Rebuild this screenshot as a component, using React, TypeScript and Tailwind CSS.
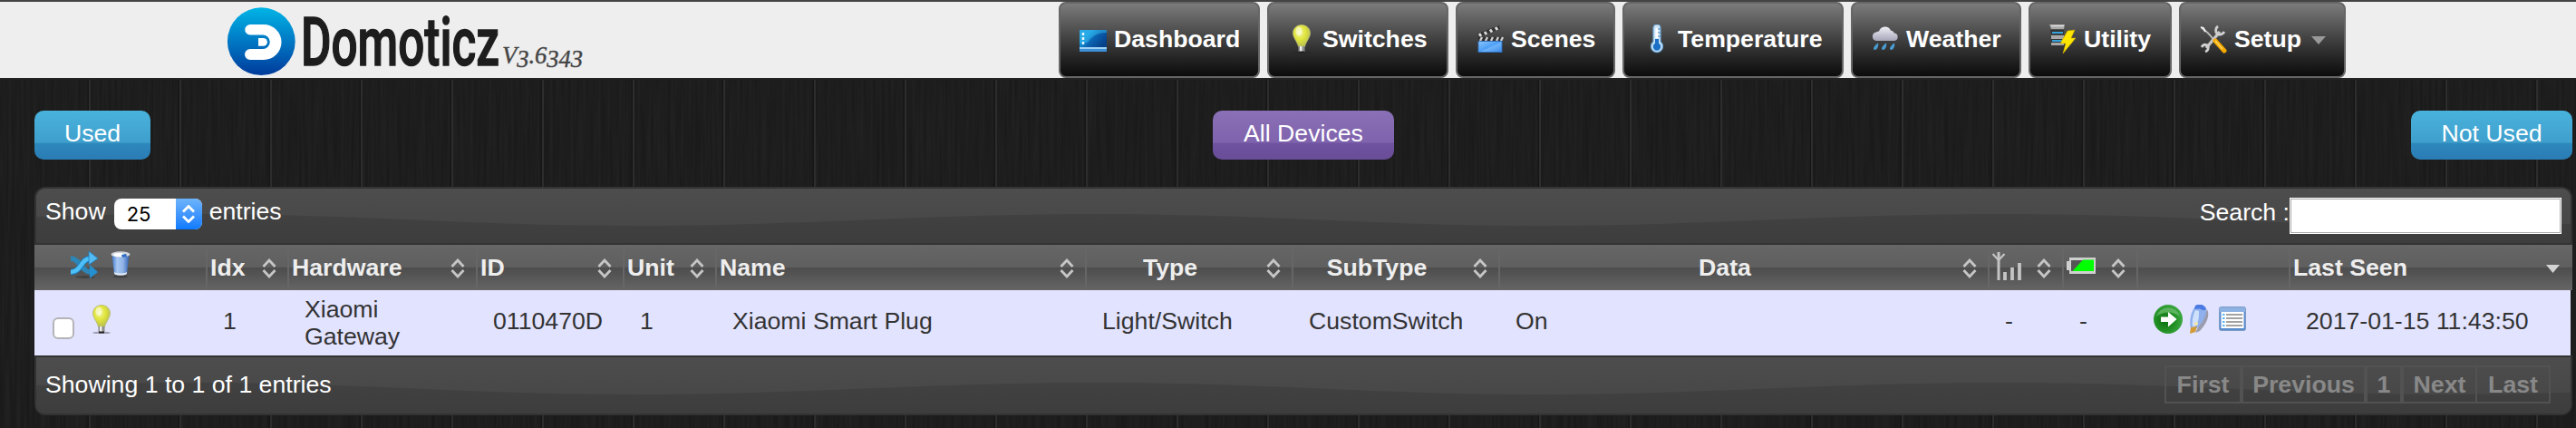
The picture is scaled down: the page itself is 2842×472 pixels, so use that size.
import React, { FC, ReactNode } from 'react';

const DashboardIcon = () => (
  <svg width="32" height="32" viewBox="0 0 32 32">
    <defs>
      <linearGradient id="dash" x1="0" y1="0" x2="1" y2="0.6">
        <stop offset="0" stopColor="#1d9be0" />
        <stop offset="0.35" stopColor="#1597dc" />
        <stop offset="0.6" stopColor="#0b62b0" />
        <stop offset="1" stopColor="#07418a" />
      </linearGradient>
    </defs>
    <rect x="1" y="6" width="30" height="20" fill="url(#dash)" />
    <path d="M1 6h30v3C20 9 14 13 10 20H1z" fill="#3ec0f2" opacity="0.45" />
    <rect x="1" y="25" width="30" height="5" fill="#3d8fd6" />
    <rect x="1" y="25" width="30" height="2" fill="#9fd0f3" />
    <path d="M5 9v3M5 14v3M5 19v3" stroke="#e8f6ff" strokeWidth="2.5" />
  </svg>
);

const BulbIcon = () => (
  <svg width="32" height="32" viewBox="0 0 32 32">
    <defs>
      <radialGradient id="bulb" cx="0.4" cy="0.35" r="0.65">
        <stop offset="0" stopColor="#f4f6a0" />
        <stop offset="0.5" stopColor="#e0e53c" />
        <stop offset="1" stopColor="#b9bf52" />
      </radialGradient>
    </defs>
    <ellipse cx="16" cy="31" rx="10" ry="1.3" fill="#222" opacity="0.35" />
    <path
      d="M16 .5c-5.500 0-9.500 4-9.500 9 0 5 4.500 9 6 15h7c1.500-6 6-10 6-15 0-5-4-9-9.500-9z"
      fill="url(#bulb)"
      stroke="#b5b878"
      strokeWidth="0.8"
    />
    <ellipse cx="13" cy="7.500" rx="3.500" ry="5" fill="#fff" opacity="0.5" />
    <rect x="12.500" y="24" width="7" height="6" fill="#8d8d8d" />
    <rect x="14" y="24" width="2.500" height="6" fill="#eee" />
    <rect x="13" y="29.500" width="6" height="2" fill="#222" />
  </svg>
);

const ScenesIcon = () => (
  <svg width="32" height="32" viewBox="0 0 32 32">
    <defs>
      <linearGradient id="scene" x1="0" y1="0" x2="1" y2="1">
        <stop offset="0" stopColor="#8cc5fb" />
        <stop offset="0.5" stopColor="#4c9ff6" />
        <stop offset="0.55" stopColor="#6fb4fa" />
        <stop offset="1" stopColor="#3a8bea" />
      </linearGradient>
    </defs>
    <path d="M2 10 26 1l1 4L3 14z" fill="#333" />
    <path d="m4 10 2 3M10 8l2 3M16 5.500l2 3M22 3l2 3" stroke="#ddd" strokeWidth="2.800" />
    <path d="M3 14h27v5H3z" fill="#2c2c2c" />
    <path d="m7 14-2 4M13 14l-2 4M19 14l-2 4M25 14l-2 4M30 14l-2 4" stroke="#ccc" strokeWidth="2.500" />
    <rect x="3" y="18.500" width="26" height="12" fill="url(#scene)" />
    <rect x="3" y="18.500" width="26" height="12" fill="none" stroke="#2f6fc0" strokeWidth="0.8" />
  </svg>
);

const TemperatureIcon = () => (
  <svg width="32" height="32" viewBox="0 0 32 32">
    <path
      d="M12 4a4 4 0 0 1 8 0v15a6.500 6.500 0 1 1-8 0z"
      fill="#cfe6f8"
      stroke="#6fa9d6"
      strokeWidth="1.200"
    />
    <path d="M16 16v8" stroke="#1b6fc6" strokeWidth="4" />
    <circle cx="16" cy="24.500" r="4.200" fill="#1b6fc6" />
    <path d="M16 4v11" stroke="#fff" strokeWidth="3" />
    <path d="M17 5h3M17 9h3M17 13h3" stroke="#4682b4" strokeWidth="1" />
  </svg>
);

const WeatherIcon = () => (
  <svg width="32" height="32" viewBox="0 0 32 32">
    <defs>
      <linearGradient id="cloud" x1="0" y1="0" x2="0" y2="1">
        <stop offset="0" stopColor="#efeff7" />
        <stop offset="1" stopColor="#a5a5b8" />
      </linearGradient>
    </defs>
    <path
      d="M6 18a4.800 4.800 0 0 1 0-9.500C7 7.500 8.500 7.500 9 7.500a7 7 0 0 1 13-1 5 5 0 0 1 4 3A4.300 4.300 0 0 1 26 18z"
      fill="url(#cloud)"
    />
    <path
      d="M8 20.500c1 3-1 7.500-3.500 7.500s-2-4 3.500-7.500zM17 20.500c1 3-1 7.500-3.500 7.500s-2-4 3.500-7.500zM26 20.500c1 3-1 7.500-3.500 7.500s-2-4 3.500-7.500z"
      fill="#4a9bd0"
    />
  </svg>
);

const UtilityIcon = () => (
  <svg width="32" height="32" viewBox="0 0 32 32">
    <path d="M1 0h17l-1 5H3zM3 12h14v4H3zM3 20h14v3H3z" fill="#a9a9a9" />
    <path d="M2 6h15v5H3zM3 16h14v4H3z" fill="#333" />
    <path d="M4 9h12M4 18h12" stroke="#35a3dd" strokeWidth="2" />
    <path d="M3 1.500h14" stroke="#ddd" strokeWidth="1.500" />
    <path d="m21 7 8-1-4 9h5L16 32l3-11h-6z" fill="#ffe600" stroke="#c9a800" strokeWidth="0.6" />
  </svg>
);

const SetupIcon = () => (
  <svg width="32" height="32" viewBox="0 0 32 32">
    <path d="M3 4c5 3 10 8 14 14" stroke="#bdbdbd" strokeWidth="2" fill="none" />
    <path d="m2 3 3 1 2 4" stroke="#eee" strokeWidth="2" fill="none" />
    <path d="M23 8 8 26" stroke="#c4c4c4" strokeWidth="3.500" />
    <path d="M21 2c-3 2-3 6-1 8s6 1.500 8-2" fill="none" stroke="#d0d0d0" strokeWidth="2.800" />
    <path d="M3 25c2-4 6-3 7-1s0 5-3 6" fill="none" stroke="#d0d0d0" strokeWidth="2.800" />
    <path d="m18 18 10 11" stroke="#f5a800" strokeWidth="5" strokeLinecap="round" />
    <path d="m18 18 8 9" stroke="#ffd75e" strokeWidth="1.500" />
  </svg>
);

const ShuffleIcon = () => (
  <svg width="32" height="32" viewBox="0 0 32 32" fill="none">
    <ellipse cx="17" cy="28.500" rx="11" ry="1.500" fill="#222" opacity="0.4" />
    <path d="M1 8c10 0 12 15 22 15" stroke="#2c86b8" strokeWidth="5.500" />
    <path d="m22 15 9 8-9 7z" fill="#2490cf" />
    <path d="M1 23C13 23 12 8 23 8" stroke="#1d7fbf" strokeWidth="6.500" />
    <path d="M1 23C13 23 12 8 23 8" stroke="#4fc0f7" strokeWidth="4.500" />
    <path d="m21 0 10 8-10 7z" fill="#53baf2" stroke="#1d7fbf" strokeWidth="0.8" />
  </svg>
);

const TrashIcon = () => (
  <svg width="32" height="32" viewBox="0 0 32 32">
    <defs>
      <linearGradient id="trash" x1="0" y1="0" x2="1" y2="0">
        <stop offset="0" stopColor="#3f78cc" />
        <stop offset="0.3" stopColor="#a9c8f2" />
        <stop offset="0.65" stopColor="#8fb2e6" />
        <stop offset="1" stopColor="#2f62b4" />
      </linearGradient>
    </defs>
    <ellipse cx="16" cy="28" rx="8" ry="1.500" fill="#222" opacity="0.4" />
    <path d="M6.500 3h19L23 25c-2 2-12 2-14 0z" fill="url(#trash)" />
    <path d="M9 23c3 2 11 2 14 0l-.3 2c-3 2-10 2-13.400 0z" fill="#e9eef6" />
    <ellipse cx="16" cy="3.500" rx="10.500" ry="3.200" fill="#cfd4da" />
    <ellipse cx="14" cy="4" rx="6" ry="2" fill="#fff" />
    <path d="m17 4 5-1 1 3-5 1z" fill="#2d6cc4" />
  </svg>
);

const SignalIcon = () => (
  <svg width="34" height="32" viewBox="0 0 34 32" fill="none" stroke="#c4c4c4">
    <path d="M7 1v31" strokeWidth="3" />
    <path d="m.5 3 6.500 7 6.500-7" strokeWidth="2.200" />
    <path d="M14 32v-9M22 32V18M30 32V13" strokeWidth="3.800" />
  </svg>
);

const BatteryIcon = () => (
  <svg width="32" height="18" viewBox="0 0 32 18">
    <path d="M0 4h3V0h29v18H3v-4H0z" fill="#cfcfcf" />
    <rect x="5" y="3" width="25" height="12" fill="#565656" />
    <path d="M18 2.500h12v12.500H6.500z" fill="#0f0" />
  </svg>
);

const ArrowIcon = () => (
  <svg width="32" height="32" viewBox="0 0 32 32">
    <defs>
      <radialGradient id="arrow" cx="0.4" cy="0.55" r="0.6">
        <stop offset="0" stopColor="#0c6e10" />
        <stop offset="0.6" stopColor="#239126" />
        <stop offset="1" stopColor="#3fa843" />
      </radialGradient>
    </defs>
    <circle cx="16" cy="16" r="16" fill="url(#arrow)" />
    <path d="M3 13A13.500 13.500 0 0 1 29 13C22 7 10 7 3 13z" fill="#8fd28f" opacity="0.5" />
    <path d="M8 13.500h8V8l9.500 8-9.500 8.500V19H8z" fill="#fff" />
  </svg>
);

const PencilIcon = () => (
  <svg width="32" height="32" viewBox="0 0 32 32">
    <path d="M23 5c4 8-2 17-8 24l-5 2z" fill="#444" opacity="0.45" />
    <path d="M10 2c4-3 10-2 12 2 1 8-4 16-10 22l-7 1C3 18 5 8 10 2z" fill="#8fb0ec" />
    <path d="M10 6c-3 6-4 13-3 19l5-3c2-6 2-11 2-15z" fill="#cfe0fa" />
    <path d="M10 1c5-3 10-1 12 4-3 2-4 1-6 0s-5 0-7 0z" fill="#4a7ae2" />
    <path d="m5 25 7-1-2 6-6 2z" fill="#d29a35" />
    <circle cx="11" cy="21" r="2" fill="#f3e7a8" />
  </svg>
);

const ListIcon = () => (
  <svg width="32" height="32" viewBox="0 0 32 32">
    <rect x="0.500" y="2.500" width="29" height="26" rx="2" fill="#5b8ccc" stroke="#7d9cc8" />
    <rect x="1" y="3" width="28" height="5" fill="#8db2e2" />
    <rect x="2.500" y="8" width="25" height="18" fill="#fff" />
    <path d="M8 11h18M8 15h18M8 19h18M8 23h18" stroke="#a3a3a3" strokeWidth="2" />
    <path d="M4 11h2.500M4 15h2.500M4 19h2.500M4 23h2.500" stroke="#5fb5f5" strokeWidth="2.200" />
  </svg>
);

const SortIcon = () => (
  <svg width="16" height="22" viewBox="0 0 16 22" fill="none" stroke="#c6c6c6" strokeWidth="2.800">
    <path d="m1.500 9 6.500-7 6.500 7M1.500 13 8 20l6.500-7" />
  </svg>
);

const Logo = () => (
  <svg className="overflow-visible" width="400" height="84" viewBox="250 2 400 84">
    <defs>
      <linearGradient id="logo" x1="0" y1="0" x2="0" y2="1">
        <stop offset="0" stopColor="#00b5e6" />
        <stop offset="0.5" stopColor="#0078c4" />
        <stop offset="1" stopColor="#003a9b" />
      </linearGradient>
    </defs>
    <circle cx="288.300" cy="45.700" r="37.400" fill="url(#logo)" />
    <path
      d="M276 27h15a19.500 19.500 0 0 1 0 39h-15a6 6 0 0 1 0-12h14a7.500 7.500 0 0 0 0-15.500h-14a5.700 5.700 0 0 1 0-11.500z"
      fill="#fff"
    />
    <path d="M285 42h5.500a4.400 4.400 0 0 1 0 8.800H285z" fill="#fff" />
    <text
      x="332"
      y="71.500"
      textLength="219"
      lengthAdjust="spacingAndGlyphs"
      className="fill-[#1d1d1d] font-[Roboto,sans-serif] text-[74px] font-medium"
      stroke="#1d1d1d"
      strokeWidth="1.500"
    >
      Domoticz
    </text>
    <text
      x="554"
      y="69.500"
      className="fill-[#444] font-['Liberation_Serif',serif] text-[26.500px] italic"
      stroke="#444"
      strokeWidth="0.400"
    >
      V<tspan dy="4">3</tspan>
      <tspan dy="-4">.6</tspan>
      <tspan dy="4">343</tspan>
    </text>
  </svg>
);

// dark wood behind the whole page, one board is 100px wide
const Boards = () => (
  <svg className="absolute inset-0" width="2842" height="472">
    <defs>
      <filter id="grain" x="0" y="0" width="100%" height="100%" colorInterpolationFilters="sRGB">
        <feTurbulence type="fractalNoise" baseFrequency="0.3 0.01" numOctaves="2" seed="4" />
        <feColorMatrix values="0.05 0 0 0 0.09  0.05 0 0 0 0.09  0.05 0 0 0 0.09  0 0 0 0 1" />
      </filter>
      <pattern id="boards" width="100" height="472" patternUnits="userSpaceOnUse">
        <rect x="96.500" width="1.500" height="472" fill="#161616" />
        <rect x="98" width="2" height="472" fill="#2d2d2d" />
      </pattern>
    </defs>
    <rect width="2842" height="472" filter="url(#grain)" />
    <rect width="2842" height="472" fill="url(#boards)" />
  </svg>
);

const Wave: FC<{ height: number }> = ({ height }) => (
  <svg className="absolute inset-0" width="2796" height={height}>
    <defs>
      <linearGradient id="waveTop" x1="0" y1="0" x2="0" y2="1">
        <stop offset="0" stopColor="#4d4d4d" />
        <stop offset="1" stopColor="#454545" />
      </linearGradient>
      <linearGradient id="waveBottom" x1="0" y1="0" x2="0" y2="1">
        <stop offset="0" stopColor="#414141" />
        <stop offset="1" stopColor="#3a3a3a" />
      </linearGradient>
    </defs>
    <rect width="2796" height={height} fill="url(#waveTop)" />
    <path
      d="M-340 41C-170 41-20 28 170 28S480 41 660 41 980 28 1170 28s310 13 490 13 320-13 510-13 310 13 490 13 320-13 510-13v60H-340z"
      fill="url(#waveBottom)"
    />
  </svg>
);

const menu = [
  { label: 'Dashboard', icon: <DashboardIcon />, width: 'w-[222px]' },
  { label: 'Switches', icon: <BulbIcon />, width: 'w-[200px]' },
  { label: 'Scenes', icon: <ScenesIcon />, width: 'w-[176px]' },
  { label: 'Temperature', icon: <TemperatureIcon />, width: 'w-[244px]' },
  { label: 'Weather', icon: <WeatherIcon />, width: 'w-[188px]' },
  { label: 'Utility', icon: <UtilityIcon />, width: 'w-[158px]' },
  { label: 'Setup', icon: <SetupIcon />, width: 'w-[184px]' },
];

const Navbar = () => (
  <header className="relative flex h-[88px] border-t-2 border-b-2 border-t-[#444] border-b-[#222] bg-[#eee] pl-[250px]">
    <Logo />
    <nav className="mr-[254px] ml-auto flex gap-2">
      {menu.map((item) => (
        <a
          key={item.label}
          className={`flex h-[84px] items-center rounded-lg border-2 border-[#666] bg-linear-to-b from-[#7c7c7c] to-[#0c0c0c] pb-[3px] pl-5 font-bold text-white ${item.width}`}
        >
          <span className="mr-[7px] shrink-0">{item.icon}</span>
          {item.label}
          {item.label === 'Setup' && (
            <svg className="mt-1 ml-[11px]" width="16" height="9">
              <path d="M0 0h16L8 9z" fill="#999" />
            </svg>
          )}
        </a>
      ))}
    </nav>
  </header>
);

const Button: FC<{ children: ReactNode; className: string }> = ({ children, className }) => (
  <button
    className={`flex h-[54px] items-center justify-center rounded-[10px] bg-linear-to-b pb-[5px] text-white ${className}`}
  >
    {children}
  </button>
);

const blue = 'bg-[linear-gradient(#49b3dc_0%,#3f9fcc_65%,#2d88bd_67%,#2a7cb4_100%)]';
const purple = 'bg-[linear-gradient(#8a70b6_0%,#7f63ad_65%,#6f52a0_67%,#694d98_100%)]';

const columns =
  'grid grid-cols-[189px_90px_208px_162px_102px_408px_228px_228px_540px_82px_82px_168px_313px]';

const HeadCell: FC<{ children?: ReactNode; center?: boolean; sort?: boolean }> = ({
  children,
  center,
  sort = true,
}) => (
  <div className="flex h-full items-center border-l-2 border-[#666] pr-3 pl-[3px]">
    <div className={center ? 'flex flex-1 justify-center pr-[17px]' : 'flex-1'}>{children}</div>
    {sort && (
      <span className="mt-0.5">
        <SortIcon />
      </span>
    )}
  </div>
);

const DevicesTable = () => (
  <section className="mt-[30px] w-[2800px]">
    <div className="relative h-16 overflow-hidden rounded-t-xl border-2 border-[#333] bg-[#444]">
      <Wave height={62} />
      <div className="relative flex h-[58px] items-start justify-between pr-2.5 pl-[10px] text-white">
        <div className="flex h-[49px] items-center">
          Show
          <span className="mt-[7px] ml-[9px] flex h-[34px] w-[97px] items-center rounded-lg bg-white font-[Inter,sans-serif] text-[22px] text-black">
            <span className="flex-1 pl-3.5">25</span>
            <span className="flex h-[34px] w-[29px] items-center justify-center rounded-r-lg bg-linear-to-b from-[#6cb3fa] to-[#067aff]">
              <svg width="14" height="20" fill="none" stroke="#fff" strokeWidth="2.800">
                <path d="m1 7.500 6-6 6 6M1 12.500l6 6 6-6" />
              </svg>
            </span>
          </span>
          <span className="ml-2">entries</span>
        </div>
        <div className="flex pt-2.5">
          <span className="-mt-px leading-[34px]">Search :</span>
          <span className="h-10 w-[300px] border border-white bg-white">
            <span className="block h-full border border-[#aaa]" />
          </span>
        </div>
      </div>
    </div>

    <div
      className={`${columns} h-[50px] items-center bg-[linear-gradient(#666_0%,#5f5f5f_49%,#4d4d4d_51%,#656565_100%)] font-bold text-[#eee]`}
    >
      <div className="flex gap-2 pb-2.5 pl-[39px]">
        <span className="pt-1.5">
          <ShuffleIcon />
        </span>
        <span className="pt-1.5">
          <TrashIcon />
        </span>
      </div>
      <HeadCell>Idx</HeadCell>
      <HeadCell>Hardware</HeadCell>
      <HeadCell>ID</HeadCell>
      <HeadCell>Unit</HeadCell>
      <HeadCell>Name</HeadCell>
      <HeadCell center>Type</HeadCell>
      <HeadCell center>SubType</HeadCell>
      <HeadCell center>Data</HeadCell>
      <HeadCell>
        <span className="block pb-1">
          <SignalIcon />
        </span>
      </HeadCell>
      <HeadCell>
        <span className="block pb-[5px]">
          <BatteryIcon />
        </span>
      </HeadCell>
      <HeadCell sort={false} />
      <HeadCell sort={false}>
        <div className="flex items-center justify-between">
          Last Seen
          <svg className="mt-0.5 mr-0.5" width="15" height="9">
            <path d="M0 0h15L7.500 9z" fill="#d4d4d4" />
          </svg>
        </div>
      </HeadCell>
    </div>

    <div className="h-[72px] w-[2798px] overflow-hidden bg-[#e2e3ff] text-[#333]">
      <div className={`${columns} h-[72px] w-[2800px] items-center`}>
        <div className="flex h-full pl-5">
          <span className="mt-[30px] h-6 w-6 rounded-md border-2 border-[#b4b4b8] bg-white" />
          <span className="mt-4 ml-3.5">
            <BulbIcon />
          </span>
        </div>
        <div className="pb-1 pl-[19px]">1</div>
        <div className="w-[150px] pl-[19px] leading-[30px] whitespace-normal">Xiaomi Gateway</div>
        <div className="pb-1 pl-[19px]">0110470D</div>
        <div className="pb-1 pl-[19px]">1</div>
        <div className="pb-1 pl-[19px]">Xiaomi Smart Plug</div>
        <div className="pb-1 pl-[19px]">Light/Switch</div>
        <div className="pb-1 pl-[19px]">CustomSwitch</div>
        <div className="pb-1 pl-[19px]">On</div>
        <div className="pb-1 pl-[19px]">-</div>
        <div className="pb-1 pl-[19px]">-</div>
        <div className="flex gap-1 pb-2 pl-[19px]">
          <ArrowIcon />
          <PencilIcon />
          <ListIcon />
        </div>
        <div className="pb-1 pl-[19px]">2017-01-15 11:43:50</div>
      </div>
    </div>

    <div className="relative h-[66px] overflow-hidden rounded-b-xl border-2 border-[#333] bg-[#444]">
      <Wave height={62} />
      <div className="relative flex h-[60px] items-center justify-between pr-[22px] pl-[10px]">
        <span className="text-white">Showing 1 to 1 of 1 entries</span>
        <div className="flex font-bold text-[#888]">
          <span className="flex h-[42px] w-[85px] items-center justify-center border-2 border-[#525252]">First</span>
          <span className="flex h-[42px] w-[137px] items-center justify-center border-2 border-[#525252]">Previous</span>
          <span className="flex h-[42px] w-[40px] items-center justify-center border-2 border-[#525252]">1</span>
          <span className="flex h-[42px] w-[83px] items-center justify-center border-2 border-[#525252]">Next</span>
          <span className="flex h-[42px] w-[81px] items-center justify-center border-2 border-l-0 border-[#525252]">Last</span>
        </div>
      </div>
    </div>
  </section>
);

const App: FC = () => {
  return (
    <div className="relative h-[472px] w-[2842px] overflow-hidden bg-[#1d1d1d] font-['Liberation_Sans',Arial,sans-serif] text-[26.670px] leading-[30px] whitespace-nowrap">
      <Boards />
      <Navbar />
      <main className="relative pt-[34px] pl-[38px]">
        <div className="flex w-[2800px] justify-between">
          <Button className={`w-32 ${blue}`}>Used</Button>
          <Button className={`ml-[50px] w-[200px] ${purple}`}>All Devices</Button>
          <Button className={`w-[178px] ${blue}`}>Not Used</Button>
        </div>
        <DevicesTable />
      </main>
    </div>
  );
};

export default App;
